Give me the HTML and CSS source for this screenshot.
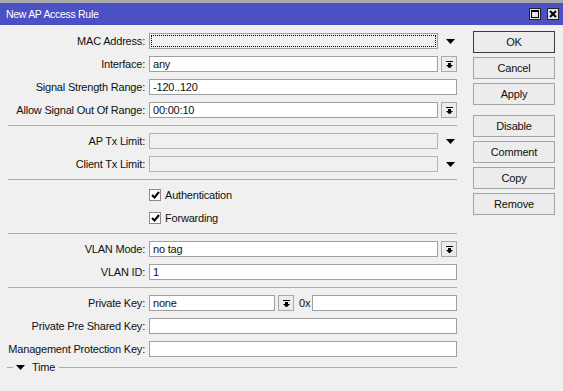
FILE: index.html
```html
<!DOCTYPE html>
<html>
<head>
<meta charset="utf-8">
<link rel="stylesheet" href="styles.css">
</head>
<body>
<div class="titlebar">
  <span class="title">New AP Access Rule</span>
  <div class="tb-btns">
    <div class="tb-btn"><svg width="8" height="8" viewBox="0 0 8 8"><rect x="0.5" y="0.5" width="7" height="7" fill="none" stroke="#000"/><rect x="0" y="0" width="8" height="2" fill="#000"/></svg></div>
    <div class="tb-btn"><svg width="8" height="8" viewBox="0 0 8 8"><path d="M1 1 L7 7 M7 1 L1 7" stroke="#000" stroke-width="2"/></svg></div>
  </div>
</div>
<div class="main">
  <div class="form">
    <div class="row"><div class="label">MAC Address:</div><div class="field w-drop focus"></div><div class="drop-arrow"><svg width="9" height="5" viewBox="0 0 9 5"><polygon points="0,0 9,0 4.5,5" fill="#000"/></svg></div></div>
    <div class="row"><div class="label">Interface:</div><div class="field w-drop">any</div><div class="drop-btn"><svg width="7" height="7" viewBox="0 0 7 7"><rect x="0" y="0" width="7" height="1"/><rect x="2" y="2" width="3" height="2"/><polygon points="0,4 7,4 3.5,7.5"/></svg></div></div>
    <div class="row"><div class="label">Signal Strength Range:</div><div class="field w-full">-120..120</div></div>
    <div class="row"><div class="label">Allow Signal Out Of Range:</div><div class="field w-drop">00:00:10</div><div class="drop-btn"><svg width="7" height="7" viewBox="0 0 7 7"><rect x="0" y="0" width="7" height="1"/><rect x="2" y="2" width="3" height="2"/><polygon points="0,4 7,4 3.5,7.5"/></svg></div></div>
    <div class="sep"></div>
    <div class="row"><div class="label">AP Tx Limit:</div><div class="field w-drop disabled"></div><div class="drop-arrow"><svg width="9" height="5" viewBox="0 0 9 5"><polygon points="0,0 9,0 4.5,5" fill="#000"/></svg></div></div>
    <div class="row"><div class="label">Client Tx Limit:</div><div class="field w-drop disabled"></div><div class="drop-arrow"><svg width="9" height="5" viewBox="0 0 9 5"><polygon points="0,0 9,0 4.5,5" fill="#000"/></svg></div></div>
    <div class="sep"></div>
    <div class="row check-row"><div class="checkbox"><svg width="9" height="8" viewBox="0 0 9 8"><path d="M1 4 L3.5 6.5 L8 1" fill="none" stroke="#000" stroke-width="2"/></svg></div><span>Authentication</span></div>
    <div class="row check-row"><div class="checkbox"><svg width="9" height="8" viewBox="0 0 9 8"><path d="M1 4 L3.5 6.5 L8 1" fill="none" stroke="#000" stroke-width="2"/></svg></div><span>Forwarding</span></div>
    <div class="sep"></div>
    <div class="row"><div class="label">VLAN Mode:</div><div class="field w-drop">no tag</div><div class="drop-btn"><svg width="7" height="7" viewBox="0 0 7 7"><rect x="0" y="0" width="7" height="1"/><rect x="2" y="2" width="3" height="2"/><polygon points="0,4 7,4 3.5,7.5"/></svg></div></div>
    <div class="row"><div class="label">VLAN ID:</div><div class="field w-full">1</div></div>
    <div class="sep"></div>
    <div class="row"><div class="label">Private Key:</div><div class="field w-key">none</div><div class="drop-btn"><svg width="7" height="7" viewBox="0 0 7 7"><rect x="0" y="0" width="7" height="1"/><rect x="2" y="2" width="3" height="2"/><polygon points="0,4 7,4 3.5,7.5"/></svg></div><span class="hex">0x</span><div class="field grow"></div></div>
    <div class="row"><div class="label">Private Pre Shared Key:</div><div class="field w-full"></div></div>
    <div class="row"><div class="label">Management Protection Key:</div><div class="field w-full"></div></div>
    <div class="time-row"><div class="line short"></div><svg class="tri" width="9" height="5" viewBox="0 0 9 5"><polygon points="0,0 9,0 4.5,5" fill="#000"/></svg><span class="time-label">Time</span><div class="line grow"></div></div>
  </div>
  <div class="actions">
    <div class="btn btn-default">OK</div>
    <div class="btn">Cancel</div>
    <div class="btn">Apply</div>
    <div class="btn btn-gap">Disable</div>
    <div class="btn">Comment</div>
    <div class="btn">Copy</div>
    <div class="btn">Remove</div>
  </div>
</div>
</body>
</html>
```
FILE: styles.css
```css
body {
  margin: 0;
  background: #f0f0f0;
  font-family: "Liberation Sans", Arial, sans-serif;
  font-size: 11px;
  letter-spacing: -0.2px;
  color: #111;
}
.titlebar {
  height: 22px;
  border-top: 3px solid #a9a9a9;
  background: #4b50c5;
  color: #fff;
  display: flex;
  align-items: center;
  padding-left: 6px;
}
.title { flex: 1; font-size: 10.5px; letter-spacing: -0.3px; }
.tb-btns { display: flex; gap: 6px; margin-right: 4px; }
.tb-btn {
  width: 12px;
  height: 12px;
  box-sizing: border-box;
  border: 1px solid #222;
  background: #e4e4e4;
  display: flex;
  align-items: center;
  justify-content: center;
}
.main { display: flex; padding-top: 6px; }
.form { width: 457px; padding-top: 2px; }
.actions {
  margin-left: 16px;
  width: 82px;
  display: flex;
  flex-direction: column;
  gap: 4px;
}
.btn {
  height: 22px;
  box-sizing: border-box;
  border: 1px solid #a5a5a5;
  background: #ececec;
  display: flex;
  align-items: center;
  justify-content: center;
}
.btn-default { border-color: #3c3c3c; }
.btn-gap { margin-top: 6px; }
.row {
  display: flex;
  align-items: center;
  height: 16px;
  margin-bottom: 7px;
}
.label {
  width: 149px;
  box-sizing: border-box;
  padding-right: 4px;
  text-align: right;
  white-space: nowrap;
}
.field {
  height: 16px;
  box-sizing: border-box;
  border: 1px solid #a0a0a0;
  background: #fff;
  padding: 0 3px;
  line-height: 14px;
  white-space: nowrap;
}
.w-full { width: 308px; }
.w-drop { width: 289px; }
.w-key { width: 126px; }
.grow { flex: 1; }
.focus {
  background: #f0f0f0;
  outline: 1px dotted #000;
  outline-offset: -3px;
}
.disabled { background: #f0f0f0; border-color: #b4b4b4; }
.drop-btn {
  margin-left: 3px;
  width: 16px;
  height: 16px;
  box-sizing: border-box;
  border: 1px solid #a9a9a9;
  background: #ececec;
  display: flex;
  align-items: center;
  justify-content: center;
}
.drop-arrow {
  margin-left: 3px;
  width: 16px;
  height: 16px;
  box-sizing: border-box;
  padding-left: 5px;
  display: flex;
  align-items: center;
}
.hex { margin-left: 5px; margin-right: 2px; }
.sep {
  height: 1px;
  background: #ababab;
  margin: 0 0 7px 8px;
}
.check-row { padding-left: 149px; }
.checkbox {
  width: 12px;
  height: 12px;
  box-sizing: border-box;
  border: 1px solid #8a8a8a;
  background: #fff;
  display: flex;
  align-items: center;
  justify-content: center;
  margin-right: 4px;
}
.time-row {
  display: flex;
  align-items: center;
  height: 16px;
  margin-top: -5px;
  margin-left: 7px;
}
.line { height: 1px; background: #ababab; }
.line.short { width: 6px; }
.tri { margin-left: 3px; }
.time-label { margin-left: 7px; margin-right: 4px; }
```
